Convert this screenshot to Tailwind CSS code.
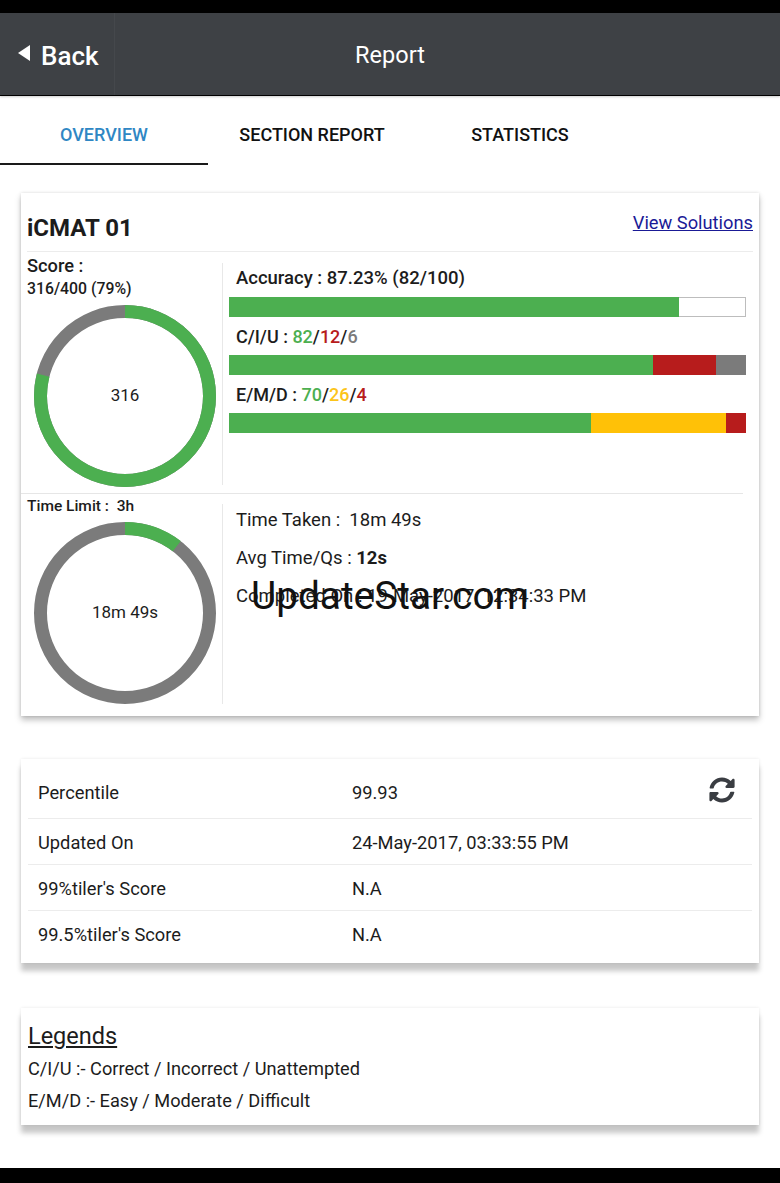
<!DOCTYPE html>
<html lang="en">
<head>
    <meta charset="UTF-8">
    <meta name="viewport" content="width=device-width, initial-scale=1.0">
    <title>Report</title>
    <script src="https://cdn.jsdelivr.net/npm/@tailwindcss/browser@4"></script>
</head>
<body class="bg-white font-['Roboto',sans-serif] text-[#1c1c1c]">
    <div class="relative flex flex-col h-[1183px] w-[780px] overflow-hidden bg-white">
        <!-- Status bar -->
        <div class="h-[13px] shrink-0 bg-black"></div>

        <!-- Header -->
        <div class="relative flex items-center h-[83px] shrink-0 bg-[#3e4145] border-b border-black shadow-[0_1px_2px_#00000033]">
            <div class="flex items-center gap-[11px] w-[115px] h-full pl-[18px] border-r border-[#45484c] text-white">
                <svg class="w-3 h-4 -mt-[2px]" viewBox="0 0 12 16"><path d="M12 0V16L0 8Z" fill="#fff"/></svg>
                <span class="text-[26px] font-medium leading-none mt-[3px]">Back</span>
            </div>
            <div class="absolute inset-x-0 mt-[3px] text-center text-white text-[23.5px] leading-none">Report</div>
        </div>

        <!-- Tabs -->
        <div class="flex h-[69px] shrink-0 text-[18px] font-medium">
            <div class="flex items-center justify-center w-[208px] pt-[10px] text-[#2f87c4] border-b-2 border-[#1a1a1a]">OVERVIEW</div>
            <div class="flex items-center justify-center w-[208px] pt-[8px] text-[#111]">SECTION REPORT</div>
            <div class="flex items-center justify-center w-[208px] pt-[8px] text-[#111]">STATISTICS</div>
        </div>

        <!-- Summary card -->
        <div class="flex flex-col mt-[28px] mx-[21px] h-[523px] shrink-0 bg-white shadow-[0_4px_6px_#00000040,0_0_3px_#00000020]">
            <div class="flex items-center justify-between h-[59px] ml-[6px] mr-[6px] shrink-0 border-b border-[#ececec]">
                <span class="text-[24px] font-bold leading-none mt-[11px]">iCMAT 01</span>
                <a href="#" class="text-[18.3px] leading-none text-[#1a1a96] underline mt-[3px]">View Solutions</a>
            </div>

            <div class="flex h-[242px] mr-[16px] border-b border-[#e6e6e6] shrink-0">
                <div class="w-[202px] shrink-0 mt-[11px] mb-[8px] border-r border-[#e8e8e8] pl-[6px]">
                    <div class="text-[18.3px] font-medium leading-[22px] -mt-[8px]">Score :</div>
                    <div class="text-[15.8px] font-medium leading-[18px] mt-[3px]">316/400 (79%)</div>
                    <div class="relative w-[182px] h-[182px] mt-[7px] ml-[7px]">
                        <svg class="w-full h-full -rotate-90" viewBox="0 0 182 182">
                            <circle cx="91" cy="91" r="84.5" fill="none" stroke="#7b7b7b" stroke-width="13"/>
                            <circle cx="91" cy="91" r="84.5" fill="none" stroke="#4caf50" stroke-width="13" pathLength="100" stroke-dasharray="79 21"/>
                        </svg>
                        <div class="absolute inset-0 flex items-center justify-center text-[17px]">316</div>
                    </div>
                </div>
                <div class="flex-1 -mr-[3px] pl-[6px] pt-[15px]">
                    <div class="pl-[7px] text-[18.5px] font-medium leading-[22px]">Accuracy : 87.23% (82/100)</div>
                    <div class="flex h-[20px] mt-[8px] border border-[#bdbdbd]">
                        <div class="w-[450px] -m-px bg-[#4caf50]"></div>
                    </div>
                    <div class="pl-[7px] mt-[9px] text-[18px] font-medium leading-[22px]">C/I/U : <span class="text-[#4caf50]">82</span>/<span class="text-[#b71c1c]">12</span>/<span class="text-[#7b7b7b]">6</span></div>
                    <div class="flex h-[20px] mt-[7px]">
                        <div class="w-[424px] bg-[#4caf50]"></div>
                        <div class="w-[63px] bg-[#b71c1c]"></div>
                        <div class="flex-1 bg-[#7b7b7b]"></div>
                    </div>
                    <div class="pl-[7px] mt-[9px] text-[18px] font-medium leading-[22px]">E/M/D : <span class="text-[#4caf50]">70</span>/<span class="text-[#fcc419]">26</span>/<span class="text-[#b71c1c]">4</span></div>
                    <div class="flex h-[20px] mt-[7px]">
                        <div class="w-[362px] bg-[#4caf50]"></div>
                        <div class="w-[135px] bg-[#ffc107]"></div>
                        <div class="flex-1 bg-[#b71c1c]"></div>
                    </div>
                </div>
            </div>

            <div class="flex flex-1">
                <div class="w-[202px] shrink-0 mt-[10px] mb-[16px] border-r border-[#e8e8e8] pl-[6px]">
                    <div class="text-[15.5px] font-medium leading-[18px] -mt-[7px]">Time Limit :&nbsp; 3h</div>
                    <div class="relative w-[182px] h-[182px] mt-[7px] ml-[7px]">
                        <svg class="w-full h-full -rotate-90" viewBox="0 0 182 182">
                            <circle cx="91" cy="91" r="84.5" fill="none" stroke="#7b7b7b" stroke-width="13"/>
                            <circle cx="91" cy="91" r="84.5" fill="none" stroke="#4caf50" stroke-width="13" pathLength="100" stroke-dasharray="10.5 89.5"/>
                        </svg>
                        <div class="absolute inset-0 flex items-center justify-center text-[17px]">18m 49s</div>
                    </div>
                </div>
                <div class="flex flex-col gap-[16px] pl-[13px] pt-[15px] text-[18.5px] leading-[22px]">
                    <div>Time Taken :&nbsp; 18m 49s</div>
                    <div>Avg Time/Qs :&nbsp;<span class="font-bold">12s</span></div>
                    <div>Completed On : 19-May-2017, 12:34:33 PM</div>
                </div>
            </div>
        </div>

        <!-- Percentile card -->
        <div class="flex flex-col mt-[43px] mx-[21px] h-[204px] shrink-0 bg-white px-[7px] text-[18.3px] shadow-[0_8px_5px_#00000038,0_0_3px_#00000018]">
            <div class="flex items-center h-[60px] pt-[8px] border-b border-[#ececec] pl-[10px]">
                <span class="w-[314px]">Percentile</span>
                <span class="flex-1">99.93</span>
                <svg class="w-[26px] h-[26px] mr-[17px] -mt-[6px]" viewBox="0 0 512 512"><path fill="#3a3d42" d="M370.72 133.28C339.458 104.008 298.888 87.962 255.848 88c-77.458.068-144.328 53.178-162.791 126.85-1.344 5.363-6.122 9.15-11.651 9.15H24.103c-7.498 0-13.194-6.807-11.807-14.176C33.933 94.924 134.813 8 256 8c66.448 0 126.791 26.136 171.315 68.685L463.03 40.97C478.149 25.851 504 36.559 504 57.941V192c0 13.255-10.745 24-24 24H345.941c-21.382 0-32.09-25.851-16.971-40.971l41.75-41.749zM32 296h134.059c21.382 0 32.09 25.851 16.971 40.971l-41.75 41.75c31.262 29.273 71.835 45.319 114.876 45.28 77.418-.07 144.315-53.144 162.787-126.849 1.344-5.363 6.122-9.15 11.651-9.15h57.304c7.498 0 13.194 6.807 11.807 14.176C478.067 417.076 377.187 504 256 504c-66.448 0-126.791-26.136-171.315-68.685L48.97 471.03C33.851 486.149 8 475.441 8 454.059V320c0-13.255 10.745-24 24-24z"/></svg>
            </div>
            <div class="flex items-center h-[46px] pt-[2px] border-b border-[#ececec] pl-[10px]">
                <span class="w-[314px]">Updated On</span>
                <span>24-May-2017, 03:33:55 PM</span>
            </div>
            <div class="flex items-center h-[46px] pt-[2px] border-b border-[#ececec] pl-[10px]">
                <span class="w-[314px]">99%tiler's Score</span>
                <span>N.A</span>
            </div>
            <div class="flex items-center h-[46px] pt-[2px] pl-[10px]">
                <span class="w-[314px]">99.5%tiler's Score</span>
                <span>N.A</span>
            </div>
        </div>

        <!-- Legends card -->
        <div class="mt-[45px] mx-[21px] h-[117px] shrink-0 bg-white pl-[7px] pt-[14px] text-[18.2px] shadow-[0_8px_5px_#00000038,0_0_3px_#00000018]">
            <div class="text-[23.5px] leading-[28px] underline">Legends</div>
            <div class="mt-[7px] leading-[24px]">C/I/U :- Correct / Incorrect / Unattempted</div>
            <div class="mt-[8px] leading-[24px]">E/M/D :- Easy / Moderate / Difficult</div>
        </div>

        <!-- Bottom bar -->
        <div class="absolute inset-x-0 bottom-0 h-[15px] bg-black"></div>

        <!-- Watermark over the screenshot -->
        <div class="absolute left-[251px] top-[573px] text-[38.8px] leading-[46px] text-[#111]">UpdateStar.com</div>
    </div>
</body>
</html>
